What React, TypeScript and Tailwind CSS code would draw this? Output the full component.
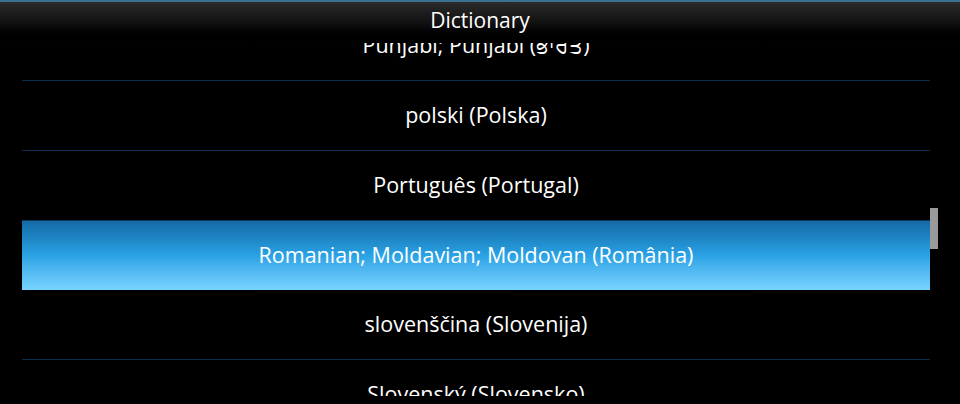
import React from "react";

const rows = [
  "Punjabi; Punjabi (ਭਾਰਤ)",
  "polski (Polska)",
  "Português (Portugal)",
  "Romanian; Moldavian; Moldovan (România)",
  "slovenščina (Slovenija)",
  "Slovenský (Slovensko)",
];

export default function App() {
  return (
    <div
      className="w-[960px] h-[404px] bg-black text-white overflow-hidden relative"
      style={{ fontFamily: '"Open Sans", "Noto Sans", sans-serif' }}
    >
      <div className="h-[2px] bg-[#3d6f8f]" />
      <div className="h-[41px] bg-gradient-to-b from-[#2b2b2b] via-[#121212] to-black flex items-center justify-center text-[21px] font-medium leading-none relative z-10 pb-[4px]">
        Dictionary
      </div>
      <div className="h-[353px] overflow-hidden relative px-[22px] pr-[30px]">
        <div className="-mt-[32px]">
          {rows.map((r, i) =>
            i === 3 ? (
              <div
                key={i}
                className="h-[70px] -mt-[1px] border-t border-[#0c3a5e] bg-gradient-to-b from-[#146aa6] via-[#2aa2e4] to-[#78d4ff] flex items-center justify-center text-[21.5px] font-medium"
              >
                {r}
              </div>
            ) : (
              <div
                key={i}
                className="h-[70px] border-b border-[#0b2d50] flex items-center justify-center text-[21.5px] font-medium"
              >
                {r}
              </div>
            )
          )}
        </div>
      </div>
      <div className="absolute left-[930px] top-[208px] w-[8px] h-[41px] bg-[#9a9a9a]" />
    </div>
  );
}
